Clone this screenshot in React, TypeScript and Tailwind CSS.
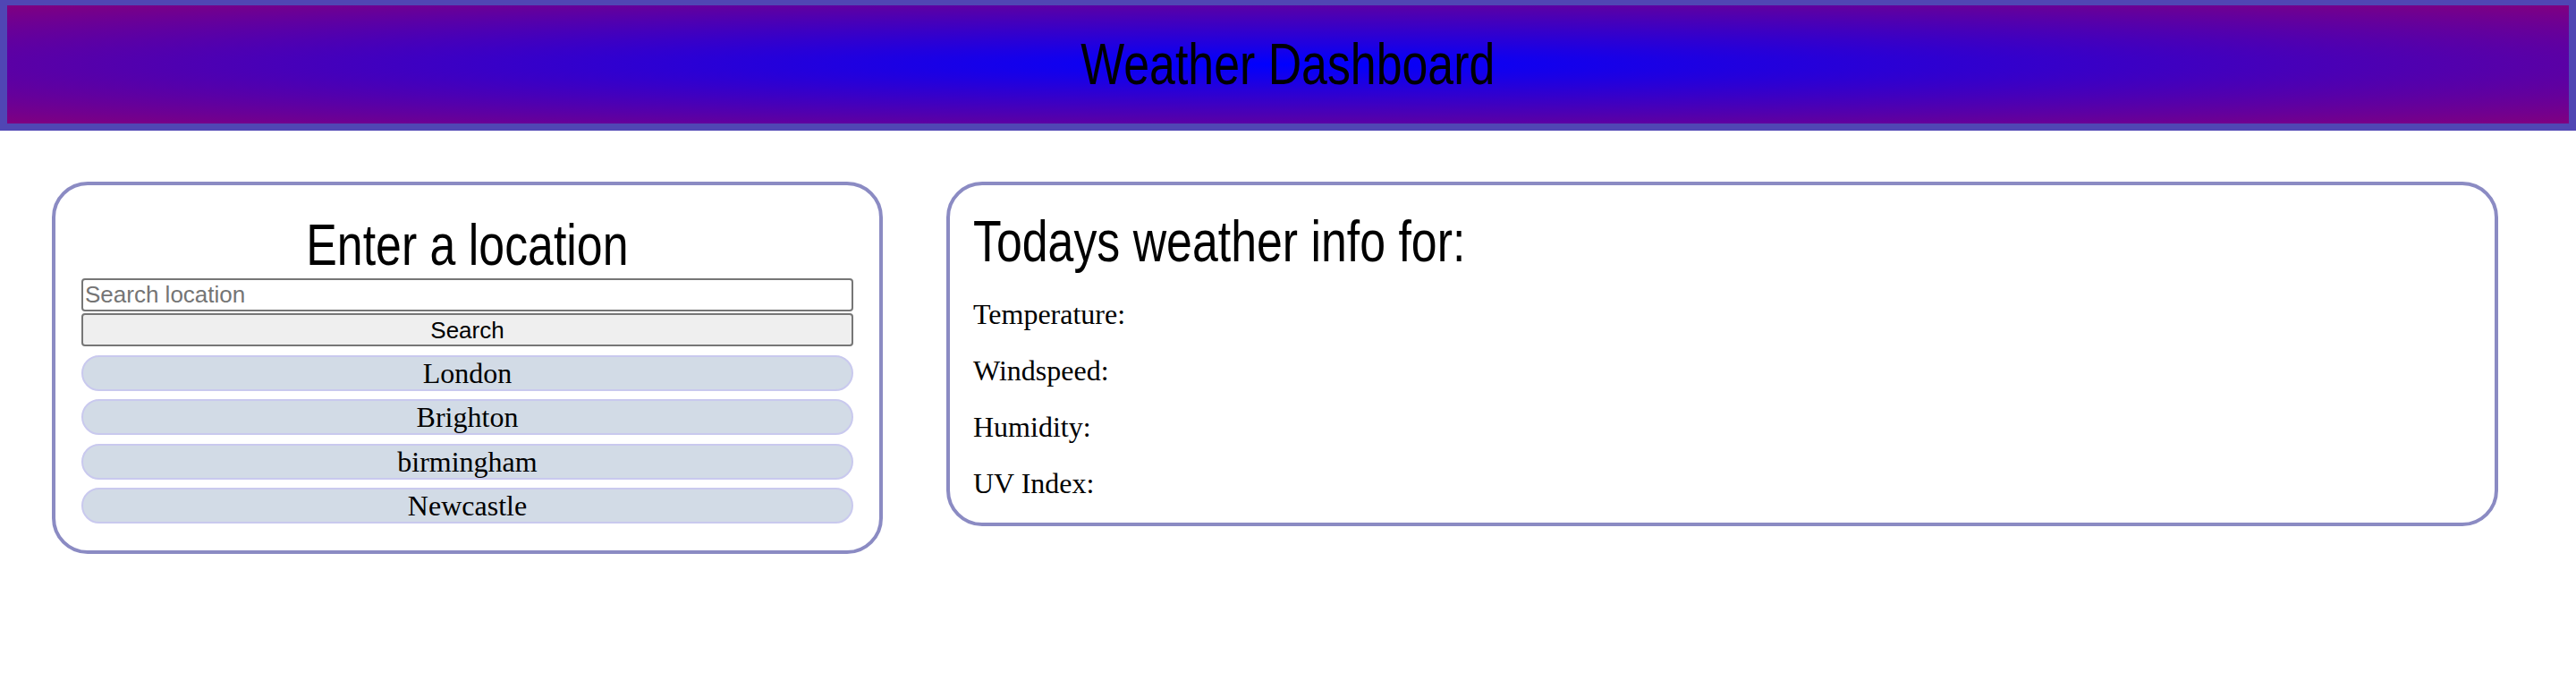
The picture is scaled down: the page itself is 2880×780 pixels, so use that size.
import { useState } from 'react'

const savedCities = ['London', 'Brighton', 'birmingham', 'Newcastle']

const weatherFields = ['Temperature:', 'Windspeed:', 'Humidity:', 'UV Index:']

export default function App() {
  const [query, setQuery] = useState('')

  return (
    <div className="min-h-screen bg-white text-black font-['Liberation_Serif','Times_New_Roman',serif]">
      {/* header */}
      <header className="flex h-[146px] items-center justify-center border-[8px] border-t-[6px] border-[#5046b4] bg-[image:radial-gradient(blue,purple)]">
        <h1 className="inline-block scale-x-[0.81] font-['Liberation_Sans',Arial,sans-serif] text-[64px] leading-[74px] font-normal">
          Weather Dashboard
        </h1>
      </header>

      <main className="flex items-start gap-[71px] pl-[58px] pt-[57px]">
        {/* search panel */}
        <section className="w-[929px] rounded-[40px] border-4 border-[#8b8bc3] px-[29px] pt-[30px] pb-[30px]">
          <h2 className="text-center font-['Liberation_Sans',Arial,sans-serif] text-[64px] leading-[74px] font-normal">
            <span className="inline-block scale-x-[0.81]">Enter a location</span>
          </h2>
          <input
            value={query}
            onChange={(e) => setQuery(e.target.value)}
            placeholder="Search location"
            className="block h-[37px] w-full rounded-[4px] border-2 border-[#767676] bg-white px-[2px] font-['Liberation_Sans',Arial,sans-serif] text-[26px] placeholder:text-[#757575] outline-none"
          />
          <button className="mt-[2px] block h-[37px] w-full rounded-[4px] border-2 border-[#767676] bg-[#efefef] font-['Liberation_Sans',Arial,sans-serif] text-[26px] leading-none">
            Search
          </button>
          <ul className="mt-[10px] flex flex-col gap-[9.3px]">
            {savedCities.map((city) => (
              <li key={city}>
                <button className="h-[40px] w-full rounded-full border-2 border-[#c9c9ee] bg-[#d2dbe6] text-[32px] leading-none">
                  {city}
                </button>
              </li>
            ))}
          </ul>
        </section>

        {/* today's weather */}
        <section className="w-[1735px] rounded-[40px] border-4 border-[#8b8bc3] p-[26px]">
          <h2 className="font-['Liberation_Sans',Arial,sans-serif] text-[64px] leading-[74px] font-normal">
            <span className="inline-block origin-left scale-x-[0.81]">Todays weather info for:</span>
          </h2>
          <div className="mt-[26px] flex flex-col gap-[27px]">
            {weatherFields.map((field) => (
              <p key={field} className="text-[32px] leading-[36px]">
                {field}
              </p>
            ))}
          </div>
        </section>
      </main>
    </div>
  )
}
